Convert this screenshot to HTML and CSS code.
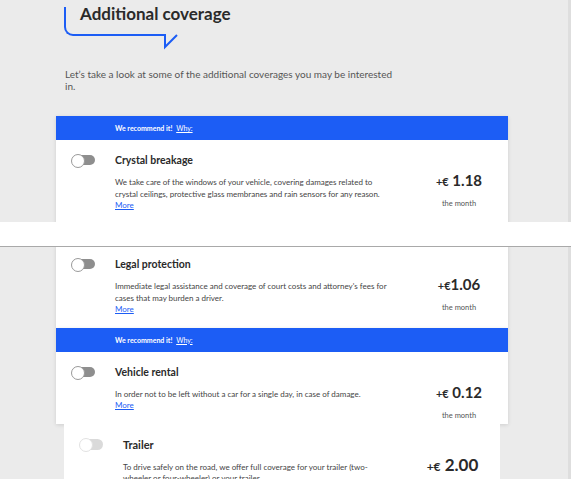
FILE: index.html
```html
<!DOCTYPE html>
<html lang="en">
<head>
<meta charset="utf-8">
<title>Additional coverage</title>
<link rel="stylesheet" href="styles.css">
</head>
<body>
<div class="shot shot-top">
  <div class="bubble">
    <h1 class="title">Additional coverage</h1>
    <svg class="tail" width="16" height="17" viewBox="0 0 16 17"><path d="M2 1 L2 14 L14 2" fill="none" stroke="#1c5df5" stroke-width="2" stroke-linejoin="miter"/></svg>
  </div>
  <p class="intro">Let’s take a look at some of the additional coverages you may be interested in.</p>

  <div class="card card-first">
    <div class="banner"><b>We recommend it!</b> <a class="why">Why:</a></div>
    <div class="row">
      <span class="toggle"></span>
      <div class="info">
        <h2 class="name">Crystal breakage</h2>
        <p class="desc">We take care of the windows of your vehicle, covering damages related to crystal ceilings, protective glass membranes and rain sensors for any reason.</p>
        <a class="more">More</a>
      </div>
      <div class="price">
        <div class="amount"><span class="cur">+€</span> 1.18</div>
        <div class="per">the month</div>
      </div>
    </div>
  </div>
</div>

<div class="gap"></div>

<div class="shot shot-bottom">
  <div class="card card-cut">
    <div class="row">
      <span class="toggle"></span>
      <div class="info">
        <h2 class="name">Legal protection</h2>
        <p class="desc">Immediate legal assistance and coverage of court costs and attorney's fees for cases that may burden a driver.</p>
        <a class="more">More</a>
      </div>
      <div class="price">
        <div class="amount"><span class="cur">+€</span>1.06</div>
        <div class="per">the month</div>
      </div>
    </div>
  </div>

  <div class="card">
    <div class="banner"><b>We recommend it!</b> <a class="why">Why:</a></div>
    <div class="row">
      <span class="toggle"></span>
      <div class="info">
        <h2 class="name">Vehicle rental</h2>
        <p class="desc">In order not to be left without a car for a single day, in case of damage.</p>
        <a class="more">More</a>
      </div>
      <div class="price">
        <div class="amount"><span class="cur">+€</span> 0.12</div>
        <div class="per">the month</div>
      </div>
    </div>
  </div>

  <div class="card card-trailer">
    <div class="row">
      <span class="toggle toggle-light"></span>
      <div class="info">
        <h2 class="name">Trailer</h2>
        <p class="desc">To drive safely on the road, we offer full coverage for your trailer (two-wheeler or four-wheeler) or your trailer.</p>
      </div>
      <div class="price">
        <div class="amount"><span class="cur">+€</span> 2.00</div>
      </div>
    </div>
  </div>
</div>
</body>
</html>
```

FILE: styles.css
```css
* { box-sizing: border-box; }

html, body {
  margin: 0;
  padding: 0;
  background: #ebebeb;
  font-family: "Lato", "Open Sans", sans-serif;
  color: #2a2a2a;
}

.shot {
  overflow: hidden;
  border-right: 3px solid #dedede;
}

.shot-top {
  height: 222px;
  padding-top: 7px;
}

.shot-bottom {
  height: 232px;
}

.gap {
  height: 25px;
  background: #ffffff;
  border-bottom: 1px solid #a9a9a9;
}

/* heading bubble */
.bubble {
  position: relative;
  margin-left: 64px;
  width: 100px;
  height: 29px;
  border-left: 2px solid #1c5df5;
  border-bottom: 2px solid #1c5df5;
  border-bottom-left-radius: 9px;
  padding-left: 14px;
}

.title {
  margin: 0;
  font-size: 17px;
  line-height: 14px;
  font-weight: 700;
  white-space: nowrap;
  color: #2a2a2a;
}

.tail {
  position: absolute;
  left: 97px;
  top: 26px;
}

.intro {
  margin: 32px 0 0 65px;
  width: 336px;
  font-size: 10px;
  line-height: 12px;
  color: #555;
}

/* cards */
.card {
  margin-left: 56px;
  width: 452px;
  background: #fff;
  box-shadow: 0 1px 4px rgba(0, 0, 0, 0.12);
}

.card-first {
  margin-top: 24px;
}

.card-cut {
  margin-top: -3px;
}

.banner {
  height: 24px;
  line-height: 24px;
  padding-left: 59px;
  background: #1c5df5;
  color: #fff;
  font-size: 7px;
}

.banner b { font-weight: 700; }

.why {
  color: #fff;
  text-decoration: underline;
  margin-left: 2px;
}

.row {
  display: grid;
  grid-template-columns: 23px 275px 1fr;
  column-gap: 20px;
  padding: 13px 0 0 16px;
  align-items: start;
}

.info {
  padding-bottom: 12px;
}

.toggle {
  position: relative;
  display: block;
  width: 23px;
  height: 10px;
  margin-top: 2px;
  border-radius: 6px;
  background: #8e8e8e;
}

.toggle::before {
  content: "";
  position: absolute;
  left: -1px;
  top: -1px;
  width: 12px;
  height: 12px;
  border-radius: 50%;
  background: #fff;
  border: 1px solid #9a9a9a;
}

.toggle-light { background: #dadada; }
.toggle-light::before { border-color: #e2e2e2; }

.name {
  margin: 0;
  font-size: 10.5px;
  line-height: 14px;
  font-weight: 700;
  color: #2a2a2a;
}

.desc {
  margin: 10px 0 0;
  font-size: 8px;
  line-height: 11.5px;
  color: #444;
}

.more {
  display: block;
  font-size: 8px;
  line-height: 11.5px;
  color: #1c5df5;
  text-decoration: underline;
}

.price {
  text-align: center;
}

.amount {
  margin-top: 17px;
  font-size: 15px;
  line-height: 20px;
  font-weight: 700;
  color: #2a2a2a;
}

.cur {
  font-size: 11px;
}

.per {
  margin-top: 7px;
  font-size: 7.5px;
  line-height: 10px;
  color: #555;
}

/* trailer card (different zoom level in source) */
.card-trailer {
  margin-left: 64px;
  width: 436px;
  box-shadow: none;
}

.card-trailer .row {
  grid-template-columns: 23px 262px 1fr;
  padding-top: 13px;
}

.card-trailer .toggle {
  height: 11px;
  margin-top: 2px;
}

.card-trailer .name {
  font-size: 11px;
  line-height: 15px;
}

.card-trailer .desc {
  margin-top: 10px;
  line-height: 11px;
}

.card-trailer .amount {
  margin-top: 17px;
  font-size: 17px;
  line-height: 22px;
}

.card-trailer .cur {
  font-size: 12px;
}
```
